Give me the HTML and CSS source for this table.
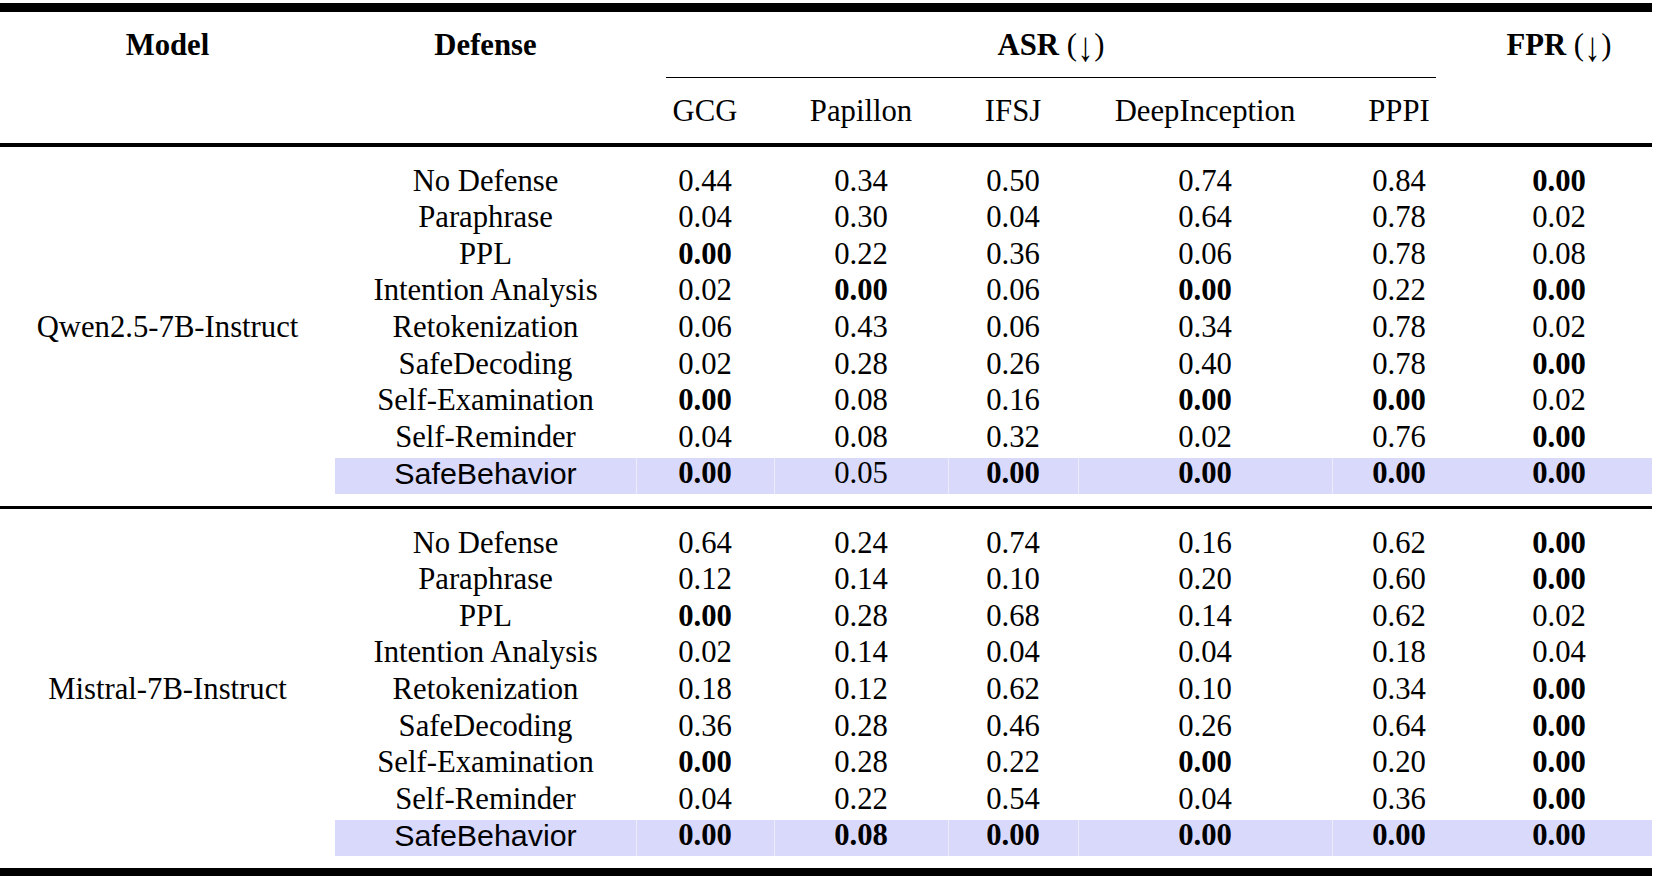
FILE: index.html
```html
<!DOCTYPE html>
<html>
<head>
<meta charset="utf-8">
<link rel="stylesheet" href="styles.css">
</head>
<body>
<div class="table">
  <div class="rule rule-top"></div>

  <div class="h b">Model</div>
  <div class="h b">Defense</div>
  <div class="h span-asr"><b>ASR</b> (<span class="arrow">↓</span>)</div>
  <div class="h"><b>FPR</b> (<span class="arrow">↓</span>)</div>

  <div class="cmid"></div>

  <div class="h sub first-sub">GCG</div>
  <div class="h sub">Papillon</div>
  <div class="h sub">IFSJ</div>
  <div class="h sub">DeepInception</div>
  <div class="h sub">PPPI</div>

  <div class="rule rule-head"></div>

  <!-- Qwen block -->
  <div class="c"></div><div class="c">No Defense</div><div class="c">0.44</div><div class="c">0.34</div><div class="c">0.50</div><div class="c">0.74</div><div class="c">0.84</div><div class="c b">0.00</div>
  <div class="c"></div><div class="c">Paraphrase</div><div class="c">0.04</div><div class="c">0.30</div><div class="c">0.04</div><div class="c">0.64</div><div class="c">0.78</div><div class="c">0.02</div>
  <div class="c"></div><div class="c">PPL</div><div class="c b">0.00</div><div class="c">0.22</div><div class="c">0.36</div><div class="c">0.06</div><div class="c">0.78</div><div class="c">0.08</div>
  <div class="c"></div><div class="c">Intention Analysis</div><div class="c">0.02</div><div class="c b">0.00</div><div class="c">0.06</div><div class="c b">0.00</div><div class="c">0.22</div><div class="c b">0.00</div>
  <div class="c">Qwen2.5-7B-Instruct</div><div class="c">Retokenization</div><div class="c">0.06</div><div class="c">0.43</div><div class="c">0.06</div><div class="c">0.34</div><div class="c">0.78</div><div class="c">0.02</div>
  <div class="c"></div><div class="c">SafeDecoding</div><div class="c">0.02</div><div class="c">0.28</div><div class="c">0.26</div><div class="c">0.40</div><div class="c">0.78</div><div class="c b">0.00</div>
  <div class="c"></div><div class="c">Self-Examination</div><div class="c b">0.00</div><div class="c">0.08</div><div class="c">0.16</div><div class="c b">0.00</div><div class="c b">0.00</div><div class="c">0.02</div>
  <div class="c"></div><div class="c">Self-Reminder</div><div class="c">0.04</div><div class="c">0.08</div><div class="c">0.32</div><div class="c">0.02</div><div class="c">0.76</div><div class="c b">0.00</div>
  <div class="c"></div><div class="c hl sans">SafeBehavior</div><div class="c hl sep b">0.00</div><div class="c hl sep">0.05</div><div class="c hl sep b">0.00</div><div class="c hl sep b">0.00</div><div class="c hl sep b">0.00</div><div class="c hl b">0.00</div>

  <div class="rule rule-mid"></div>

  <!-- Mistral block -->
  <div class="c"></div><div class="c">No Defense</div><div class="c">0.64</div><div class="c">0.24</div><div class="c">0.74</div><div class="c">0.16</div><div class="c">0.62</div><div class="c b">0.00</div>
  <div class="c"></div><div class="c">Paraphrase</div><div class="c">0.12</div><div class="c">0.14</div><div class="c">0.10</div><div class="c">0.20</div><div class="c">0.60</div><div class="c b">0.00</div>
  <div class="c"></div><div class="c">PPL</div><div class="c b">0.00</div><div class="c">0.28</div><div class="c">0.68</div><div class="c">0.14</div><div class="c">0.62</div><div class="c">0.02</div>
  <div class="c"></div><div class="c">Intention Analysis</div><div class="c">0.02</div><div class="c">0.14</div><div class="c">0.04</div><div class="c">0.04</div><div class="c">0.18</div><div class="c">0.04</div>
  <div class="c">Mistral-7B-Instruct</div><div class="c">Retokenization</div><div class="c">0.18</div><div class="c">0.12</div><div class="c">0.62</div><div class="c">0.10</div><div class="c">0.34</div><div class="c b">0.00</div>
  <div class="c"></div><div class="c">SafeDecoding</div><div class="c">0.36</div><div class="c">0.28</div><div class="c">0.46</div><div class="c">0.26</div><div class="c">0.64</div><div class="c b">0.00</div>
  <div class="c"></div><div class="c">Self-Examination</div><div class="c b">0.00</div><div class="c">0.28</div><div class="c">0.22</div><div class="c b">0.00</div><div class="c">0.20</div><div class="c b">0.00</div>
  <div class="c"></div><div class="c">Self-Reminder</div><div class="c">0.04</div><div class="c">0.22</div><div class="c">0.54</div><div class="c">0.04</div><div class="c">0.36</div><div class="c b">0.00</div>
  <div class="c"></div><div class="c hl sans">SafeBehavior</div><div class="c hl sep b">0.00</div><div class="c hl sep b">0.08</div><div class="c hl sep b">0.00</div><div class="c hl sep b">0.00</div><div class="c hl sep b">0.00</div><div class="c hl b">0.00</div>

  <div class="rule rule-bottom"></div>
</div>
</body>
</html>
```

FILE: styles.css
```css
html, body {
  margin: 0;
  padding: 0;
  background: #ffffff;
}

body {
  padding-top: 3px;
}

.table {
  display: grid;
  grid-template-columns: 335px 301px 138px 174px 130px 254px 134px 186px;
  width: 1652px;
  font-family: "Liberation Serif", "Times New Roman", serif;
  font-size: 30.7px;
  color: #000;
}

.b, b {
  font-weight: bold;
}

.rule {
  grid-column: 1 / -1;
  background: #000;
}

.rule-top {
  height: 8.5px;
}

.rule-head {
  height: 3.6px;
  margin-bottom: 18px;
}

.rule-mid {
  height: 3.6px;
  margin-top: 11.5px;
  margin-bottom: 17.5px;
}

.rule-bottom {
  height: 10px;
  margin-top: 11.5px;
}

.h {
  box-sizing: border-box;
  height: 65px;
  padding-top: 18.6px;
  line-height: 30.5px;
  text-align: center;
  white-space: nowrap;
}

.sub {
  padding-top: 17.8px;
}

.arrow {
  display: inline-block;
  font-family: "Liberation Serif", serif;
  font-weight: normal;
  transform: translateY(3px) scale(1.05, 1.35);
  margin: 0 1px;
}

.span-asr {
  grid-column: 3 / 8;
}

.cmid {
  grid-column: 3 / 8;
  height: 1.8px;
  margin: 0 30px;
  background: #000;
}

.first-sub {
  grid-column-start: 3;
}

.c {
  box-sizing: border-box;
  height: 36.6px;
  padding-top: 0.8px;
  line-height: 30.5px;
  text-align: center;
  white-space: nowrap;
}

.hl {
  background: #d9d9fc;
}

.sep {
  box-shadow: inset 1px 0 0 #ececfa;
}

.sans {
  font-family: "Liberation Sans", Arial, sans-serif;
  font-size: 30.4px;
}
```
